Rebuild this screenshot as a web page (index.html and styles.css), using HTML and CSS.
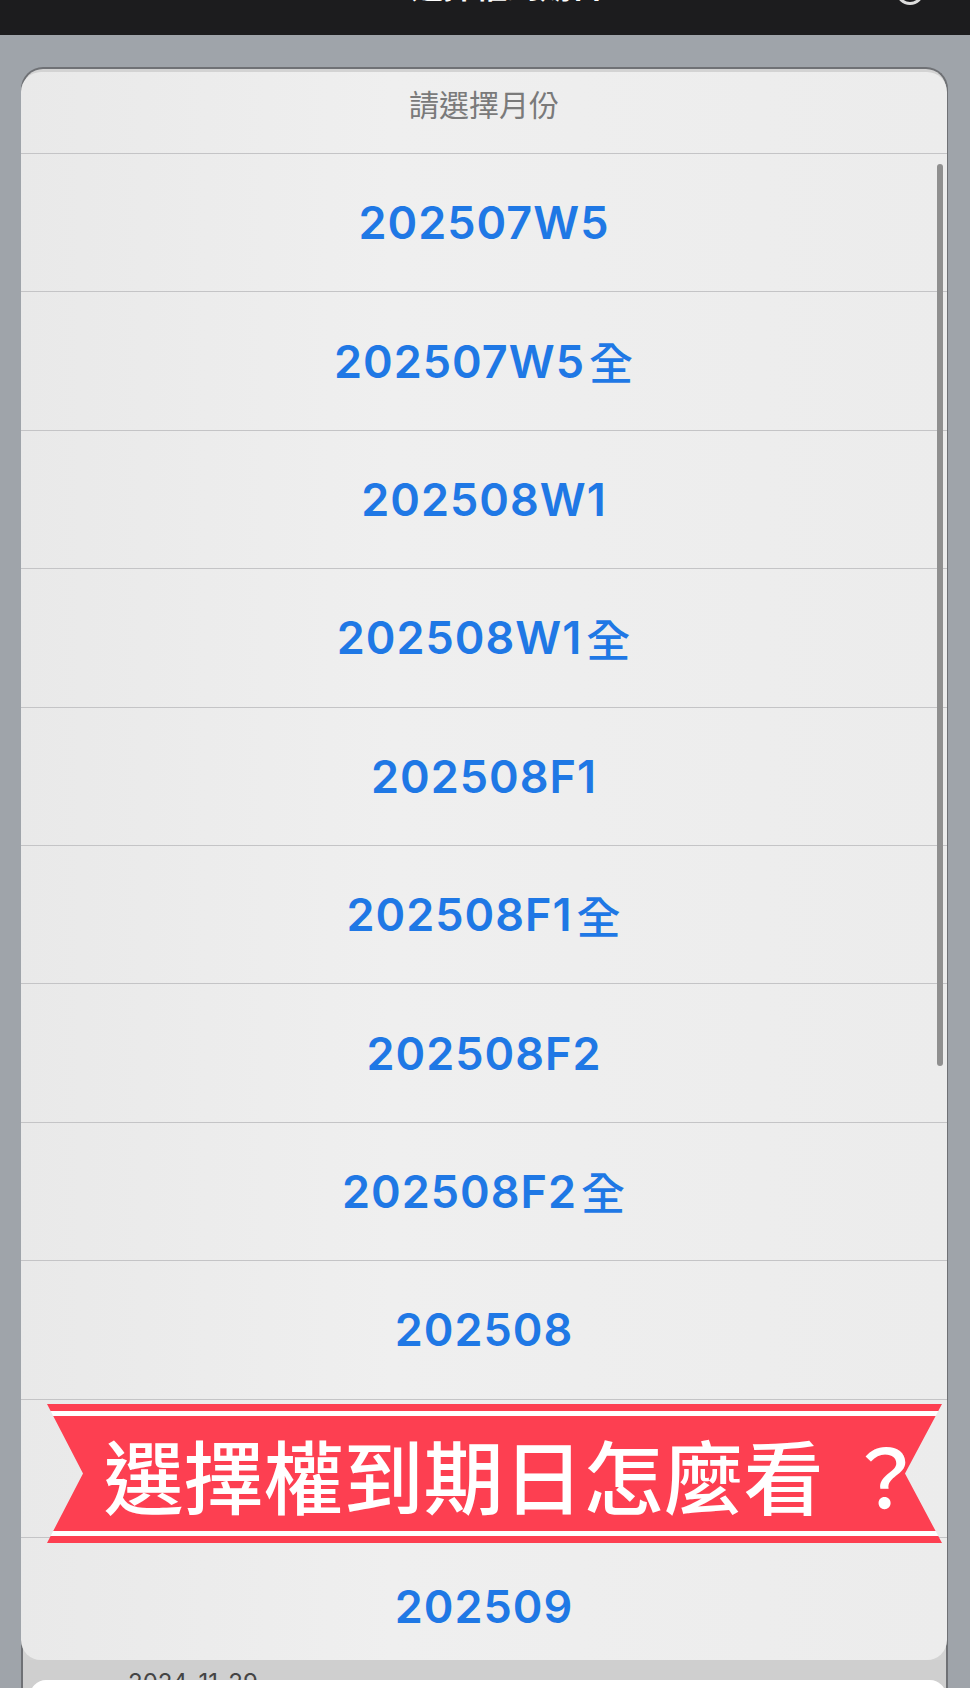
FILE: index.html
```html
<!DOCTYPE html>
<html lang="zh-Hant">

<head>
    <meta charset="UTF-8">
    <meta name="viewport" content="width=device-width, initial-scale=1.0">
    <title>請選擇月份</title>
    <link rel="stylesheet" href="styles.css">
</head>

<body>
    <div id="page">
        <!-- 上方狀態列 (只露出一點點) -->
        <div class="status">
            <span class="status-time">14:51</span>
            <span class="status-title">選擇權到期日</span>
            <span class="status-icon"></span>
        </div>

        <div class="backdrop">
            <div class="back-card">
                <div class="sheet">
                    <div class="sheet-title">請選擇月份</div>
                    <div class="option">202507W5</div>
                    <div class="option">202507W5<span class="all">全</span></div>
                    <div class="option">202508W1</div>
                    <div class="option">202508W1<span class="all">全</span></div>
                    <div class="option">202508F1</div>
                    <div class="option">202508F1<span class="all">全</span></div>
                    <div class="option">202508F2</div>
                    <div class="option">202508F2<span class="all">全</span></div>
                    <div class="option">202508</div>
                    <div class="option">202508<span class="all">全</span></div>
                    <div class="option">202509</div>
                    <div class="option">202509<span class="all">全</span></div>
                    <div class="scrollbar"></div>
                </div>
                <div class="under">
                    <div class="under-date">2024-11-29</div>
                    <div class="under-card"></div>
                </div>
            </div>
        </div>

        <!-- 紅色緞帶標題 -->
        <div class="ribbon">選擇權到期日怎麼看<span class="q">？</span></div>
    </div>
</body>

</html>
```

FILE: styles.css
```css
body {
    margin: 0;
    background-color: #9fa4aa;
}
#page {
    width: 970px; height: 1688px;
    position: relative;
    overflow: hidden;
    font-family: "Noto Sans CJK TC", sans-serif;
}
.status {
    height: 35px;
    background-color: #1c1c1e;
    display: flex;
    justify-content: space-between;
    align-items: flex-start;
    padding: 0 46px 0 40px;
    color: #fff;
    font: 600 32px/32px Inter, "Noto Sans CJK TC", sans-serif;
    overflow: hidden;
}
.status span{
    margin-top: -29px;
}
.status-icon{
    width: 22px; height: 22px;
    border: 3px solid #ddd;
    border-radius: 50%;
    margin-top: -23px !important;
}
.backdrop{
    padding-top: 32px;
}
.back-card{
    margin: 0 22px 0 21px;
    border: 2px solid #6f7175;
    border-bottom: none;
    border-radius: 22px 22px 0 0;
    background-color: #d3d3d3;
    padding-top: 3px;
}
.sheet{
    position: relative;
    margin: 0 -1px 0 -2px;
    height: 1588px;
    border-radius: 20px;
    overflow: hidden;
    background: linear-gradient(90deg, #e9e9e9, #efefef 40%, #ececec);
}
.sheet-title{
    height: 82px;
    box-sizing: border-box;
    padding-top: 13px;
    border-bottom: 1px solid #c4c4c6;
    text-align: center;
    color: #7a7a7a;
    font-size: 30px;
    line-height: 36px;
}
.option{
    height: 138.4px;
    box-sizing: border-box;
    border-bottom: 1px solid #c4c4c6;
    display: flex;
    align-items: center;
    justify-content: center;
    color: #1f78e5;
    font: 600 45px Inter, "Noto Sans CJK TC", sans-serif;
    letter-spacing: 1px;
}
.option .all{
    margin-left: 4px;
    font-size: 44px;
    font-weight: 500;
}
/* 右邊捲軸 */
.scrollbar{
    position: absolute;
    left: 916px; top: 92px;
    width: 6px; height: 902px;
    border-radius: 3px;
    background-color: #8f8f8f;
}
.under{
    height: 40px;
    background-color: #cfcfcf;
    overflow: hidden;
}
.under-date{
    height: 20px;
    padding-left: 105px;
    color: #444;
    font: 400 24px/46px Inter, sans-serif;
    overflow: hidden;
}
.under-card{
    margin-left: 7px;
    height: 40px;
    background-color: #fff;
    border-radius: 16px 16px 0 0;
}
/* 緞帶 */
.ribbon{
    position: absolute;
    left: 47px; top: 1404px;
    width: 895px; height: 139px;
    box-sizing: border-box;
    padding-left: 40px;
    clip-path: polygon(0 0, 100% 0, calc(100% - 37px) 50%, 100% 100%, 0 100%, 36px 50%);
    background: linear-gradient(180deg, #fd3f51 7px, #fff 7px, #fff 12px, #fd3f51 12px, #fd3f51 127px, #fff 127px, #fff 132px, #fd3f51 132px);
    color: #fff;
    font-size: 80px;
    font-weight: 500;
    line-height: 139px;
    text-align: center;
}
.ribbon .q{
    margin-left: 22px;
}
```
